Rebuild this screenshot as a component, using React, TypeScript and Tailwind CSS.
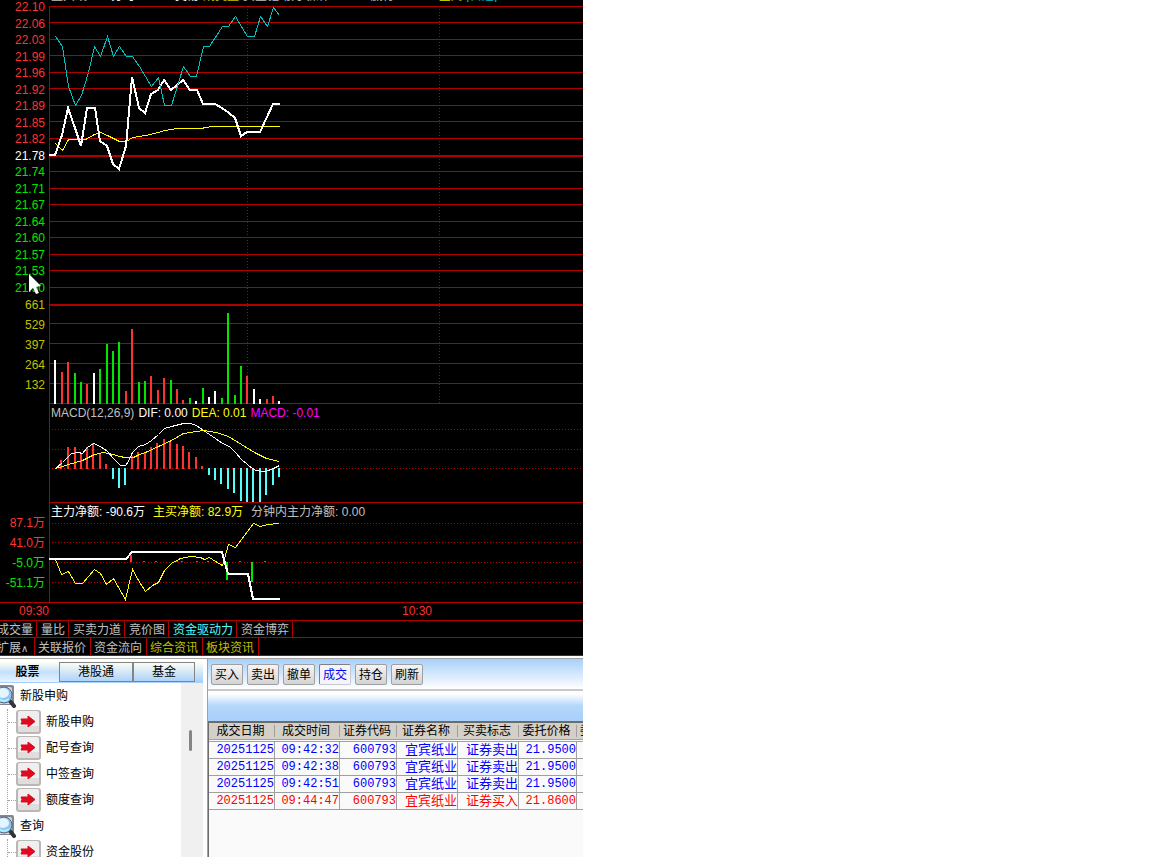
import clsx from 'clsx'

type Point = [number, number]
type Bar = [number, number, string]

const RED = '#ff3232'
const GREEN = '#00e600'
const WHITE = '#ffffff'
const CYAN = '#54fcfc'
const GRID = '#b00000'

const upPrices = ['22.10', '22.06', '22.03', '21.99', '21.96', '21.92', '21.89', '21.85', '21.82']
const downPrices = ['21.74', '21.71', '21.67', '21.64', '21.60', '21.57', '21.53', '21.50']
const volumes = ['661', '529', '397', '264', '132']

const priceGrid = [6, 22, 39, 55, 72, 88, 105, 121, 138, 171, 188, 204, 221, 237, 254, 270, 287, 323, 343, 363, 383, 403]

const priceLine: Point[] = [
  [49, 155], [55, 155], [62, 135], [68, 108], [75, 128], [81, 146], [87, 108], [95, 108], [100, 141],
  [107, 146], [113, 164], [119, 169], [126, 146], [132, 77], [139, 108], [145, 113], [151, 94], [158, 90],
  [164, 80], [171, 90], [183, 80], [190, 90], [197, 90], [203, 104], [215, 104], [222, 108], [229, 113],
  [235, 118], [241, 136], [247, 132], [260, 132], [273, 104], [280, 104],
]
const indexLine: Point[] = [
  [55, 36], [62, 46], [68, 86], [75, 105], [81, 95], [88, 72], [94, 46], [100, 56], [107, 36], [113, 56],
  [119, 46], [126, 56], [132, 56], [139, 66], [145, 76], [151, 86], [158, 77], [164, 105], [171, 105],
  [183, 66], [190, 76], [196, 76], [203, 46], [209, 46], [222, 26], [228, 26], [235, 16], [247, 36],
  [254, 36], [260, 16], [267, 26], [273, 7], [279, 15],
]
const averageLine: Point[] = [
  [55, 143], [62, 150], [68, 139], [85, 139], [94, 134], [100, 132], [107, 135], [113, 138], [119, 141],
  [126, 141], [132, 137], [145, 135], [158, 132], [164, 130], [177, 128], [200, 128], [212, 126], [279, 126],
]

const volumeBars: Bar[] = [
  [55, 360, WHITE], [62, 372, RED], [68, 362, RED], [75, 373, GREEN], [81, 382, GREEN], [87, 384, RED],
  [94, 373, WHITE], [100, 369, GREEN], [107, 344, GREEN], [113, 351, GREEN], [119, 342, GREEN], [126, 391, RED],
  [132, 329, RED], [139, 382, GREEN], [145, 381, GREEN], [151, 376, RED], [158, 390, RED], [164, 378, RED],
  [171, 380, GREEN], [177, 389, RED], [183, 400, RED], [190, 398, GREEN], [196, 401, WHITE], [203, 388, GREEN],
  [209, 397, WHITE], [215, 391, WHITE], [222, 398, GREEN], [228, 313, GREEN], [235, 395, GREEN],
  [241, 366, GREEN], [247, 376, RED], [254, 389, WHITE], [260, 399, WHITE], [267, 399, RED], [273, 396, RED],
  [279, 401, WHITE],
]

const macdBars: Point[] = [
  [61, 460], [68, 447], [75, 447], [81, 454], [87, 447], [93, 443], [100, 453], [106, 464], [113, 478],
  [119, 487], [125, 484], [132, 456], [138, 452], [145, 452], [151, 447], [157, 443], [164, 439], [170, 442],
  [177, 444], [183, 446], [189, 452], [196, 457], [202, 466], [209, 474], [215, 479], [221, 483], [228, 488],
  [234, 492], [241, 500], [247, 502], [253, 502], [260, 501], [266, 494], [273, 484], [279, 476],
]
const difLine: Point[] = [
  [55, 468], [62, 462], [71, 453], [78, 452], [82, 453], [87, 447], [93, 443], [100, 446], [107, 451],
  [113, 458], [120, 465], [125, 465], [128, 461], [132, 452], [138, 446], [145, 444], [151, 440], [158, 434],
  [164, 428], [171, 426], [183, 423], [190, 423], [196, 425], [203, 430], [215, 438], [222, 443], [229, 446],
  [235, 452], [241, 459], [247, 464], [253, 469], [260, 471], [265, 471], [273, 468], [279, 465],
]
const deaLine: Point[] = [
  [55, 468], [62, 466], [68, 464], [75, 462], [82, 460], [88, 457], [94, 454], [103, 452], [113, 454],
  [119, 456], [125, 457], [133, 457], [139, 454], [145, 452], [158, 446], [171, 440], [183, 433], [196, 431],
  [203, 430], [209, 431], [216, 432], [228, 436], [241, 444], [254, 452], [266, 458], [279, 461],
]

const mainFlow: Point[] = [
  [49, 559], [126, 559], [132, 552], [222, 552], [228, 574], [248, 574], [253, 599], [280, 599],
]
const buyFlow: Point[] = [
  [55, 559], [61, 574], [68, 571], [75, 583], [82, 583], [88, 576], [94, 569], [100, 573], [106, 584],
  [113, 578], [125, 599], [132, 569], [138, 580], [145, 591], [152, 585], [158, 582], [164, 570], [171, 563],
  [180, 558], [190, 556], [200, 557], [204, 559], [209, 557], [215, 561], [222, 565], [228, 544], [235, 547],
  [253, 523], [260, 526], [267, 524], [279, 523],
]

const indicatorTabs = ['成交量', '量比', '买卖力道', '竞价图', '资金驱动力', '资金博弈']
const infoTabs = ['关联报价', '资金流向', '综合资讯', '板块资讯']

const toolbar = ['买入', '卖出', '撤单', '成交', '持仓', '刷新']

const tree = [
  { title: '新股申购', items: ['新股申购', '配号查询', '中签查询', '额度查询'] },
  { title: '查询', items: ['资金股份'] },
]

const columns = ['成交日期', '成交时间', '证券代码', '证券名称', '买卖标志', '委托价格', '委托数量']
const trades = [
  ['20251125', '09:42:32', '600793', '宜宾纸业', '证券卖出', '21.9500'],
  ['20251125', '09:42:38', '600793', '宜宾纸业', '证券卖出', '21.9500'],
  ['20251125', '09:42:51', '600793', '宜宾纸业', '证券卖出', '21.9500'],
  ['20251125', '09:44:47', '600793', '宜宾纸业', '证券买入', '21.8600'],
]

const Line = ({ points, color, width = 1 }: { points: Point[]; color: string; width?: number }) => (
  <polyline
    points={points.map(([x, y]) => `${x + (width === 1 ? 0.5 : 0)},${y + (width === 1 ? 0.5 : 0)}`).join(' ')}
    fill="none"
    stroke={color}
    strokeWidth={width}
  />
)

const Dotted = ({ y }: { y: number }) => (
  <line x1="52" x2="200%" y1={y + 0.5} y2={y + 0.5} stroke={GRID} strokeDasharray="1 2" />
)

const PriceChart = () => (
  <svg className="block h-[404px] w-full" shapeRendering="crispEdges" role="img" aria-label="分时走势">
    <g transform="translate(-49 0)">
      {priceGrid.map((y) => (
        <rect key={y} x="49" y={y} width="100%" height="1" fill={GRID} />
      ))}
      <rect x="49" y="155" width="100%" height="2" fill={GRID} />
      <rect x="49" y="304" width="100%" height="2" fill={GRID} />
      <rect x="49" y="6" width="1" height="398" fill={GRID} />
      {[247, 439].map((x) => (
        <line key={x} x1={x + 0.5} x2={x + 0.5} y1="9" y2="404" stroke={GRID} strokeDasharray="1 2" />
      ))}
      {volumeBars.map(([x, y, color]) => (
        <rect key={x} x={x - 1} y={y} width="2" height={404 - y} fill={color} />
      ))}
      <Line points={averageLine} color="#ffff00" />
      <Line points={priceLine} color={WHITE} width={2} />
      <Line points={indexLine} color="#00c0c0" />
    </g>
  </svg>
)

const MacdChart = () => (
  <svg className="block h-[81px] w-full" shapeRendering="crispEdges" role="img" aria-label="MACD">
    <g transform="translate(-49 -422)">
      {[429, 449, 468].map((y) => (
        <Dotted key={y} y={y} />
      ))}
      {macdBars.map(([x, y]) => (
        <rect
          key={x}
          x={x - 1}
          y={Math.min(y, 468)}
          width="2"
          height={Math.abs(468 - y) + 1}
          fill={y < 468 ? RED : CYAN}
        />
      ))}
      <Line points={difLine} color={WHITE} />
      <Line points={deaLine} color="#ffff00" />
      <rect x="49" y="502" width="100%" height="1" fill={GRID} />
    </g>
  </svg>
)

const FlowChart = () => (
  <svg className="block h-[81px] w-full" shapeRendering="crispEdges" role="img" aria-label="资金驱动力">
    <g transform="translate(-49 -521)">
      {[523, 542, 562, 582].map((y) => (
        <Dotted key={y} y={y} />
      ))}
      {[144, 156, 177, 182, 197, 208, 240, 265].map((x) => (
        <rect key={x} x={x - 1} y="561" width="2" height="1" fill={RED} />
      ))}
      <rect x="130" y="555" width="2" height="7" fill={RED} />
      <rect x="226" y="562" width="2" height="18" fill={GREEN} />
      <rect x="251" y="562" width="2" height="20" fill={GREEN} />
      <Line points={buyFlow} color="#ffff00" />
      <Line points={mainFlow} color={WHITE} width={2} />
    </g>
  </svg>
)

const Cursor = () => (
  <svg className="absolute left-7 top-[273px] h-6 w-4" viewBox="0 0 16 24" aria-hidden="true">
    <path d="M1 1v18l4-4 3 6 3-1-3-6 5-1z" fill="#fff" />
  </svg>
)

const SearchIcon = () => (
  <svg className="-ml-2 h-[26px] w-6 shrink-0" viewBox="0 0 24 26" aria-hidden="true">
    <rect x="1" y="2" width="21" height="20" rx="2" fill="#85868e" />
    <rect x="2" y="4" width="18" height="17" rx="2" fill="#d4d8e0" />
    <path d="M18 18l4 5" stroke="#33333c" strokeWidth="4" strokeLinecap="round" />
    <circle cx="12" cy="12" r="8" fill="#8cc4f6" stroke="#5c6478" strokeWidth="1" />
    <ellipse cx="11" cy="10" rx="6" ry="5" fill="#e4f5ff" />
    <path d="M7 16q5 4 10 0" stroke="#a9f0ff" strokeWidth="2" fill="none" />
  </svg>
)

const ArrowIcon = () => (
  <svg className="h-[26px] w-[26px] shrink-0" viewBox="0 0 26 26" aria-hidden="true">
    <rect x="0" y="1" width="25" height="24" rx="3" fill="#bcb6b6" />
    <rect x="2" y="2" width="21" height="21" rx="2" fill="#f0efef" />
    <path d="M2 17h21v4a2 2 0 0 1-2 2H4a2 2 0 0 1-2-2z" fill="#dfdddd" />
    <path d="M5 10h7V7l7 5.500-7 5.500v-3H5l1-2.500z" fill="#de0a20" stroke="#de0a20" strokeLinejoin="round" />
  </svg>
)

const Quotes = () => (
  <section className="relative bg-black text-xs text-[#c0c0c0]">
    <div className="absolute left-[51px] top-0 flex h-0.5 items-end gap-3 overflow-hidden whitespace-nowrap leading-3">
      <span>宜宾纸业</span>
      <span className="mr-7 text-white">分时</span>
      <span className="text-white">交易</span>
      <span className="-ml-2 text-[#c0c000]">成交量</span>
      <span className="-ml-2">资金驱动力 操作</span>
      <span className="ml-7">赢行</span>
      <span className="ml-8 text-[#c0c000]">区间</span>
      <span className="-ml-2 text-[#00c0c0]">[自选]</span>
    </div>

    {/* Price and volume */}
    <div className="flex">
      <div className="w-[49px] shrink-0 pr-1 text-right">
        <div className="flex h-[295px] flex-col justify-between leading-[14px]">
          {upPrices.map((p) => (
            <span key={p} className="text-[#ff3232]">{p}</span>
          ))}
          <span className="text-white">21.78</span>
          {downPrices.map((p) => (
            <span key={p} className="text-[#00e600]">{p}</span>
          ))}
        </div>
        {volumes.map((v) => (
          <div key={v} className="leading-5 text-[#c0c000]">{v}</div>
        ))}
      </div>
      <div className="min-w-0 flex-1">
        <PriceChart />
      </div>
    </div>

    {/* MACD */}
    <div className="ml-[49px] border-l border-[#b00000]">
      <div className="flex gap-1 whitespace-nowrap pl-px leading-[18px]">
        <span>MACD(12,26,9)</span>
        <span className="text-white">DIF: 0.00</span>
        <span className="text-[#ffff00]">DEA: 0.01</span>
        <span className="text-[#ff00ff]">MACD: -0.01</span>
      </div>
      <div className="-ml-px">
        <MacdChart />
      </div>
    </div>

    {/* Money flow */}
    <div className="flex border-b border-[#b00000]">
      <div className="w-[49px] shrink-0 whitespace-nowrap pr-1 pt-[10px] text-right leading-5">
        <div className="text-[#ff3232]">87.1万</div>
        <div className="text-[#ff3232]">41.0万</div>
        <div className="text-[#00e600]">-5.0万</div>
        <div className="text-[#00e600]">-51.1万</div>
      </div>
      <div className="min-w-0 flex-1 border-l border-[#b00000]">
        <div className="flex gap-2 whitespace-nowrap pl-px leading-[18px]">
          <span className="text-white">主力净额: -90.6万</span>
          <span className="text-[#ffff00]">主买净额: 82.9万</span>
          <span>分钟内主力净额: 0.00</span>
        </div>
        <div className="-ml-px">
          <FlowChart />
        </div>
      </div>
    </div>

    <div className="flex border-b border-[#b00000] leading-[17px] text-[#ff3232]">
      <span className="w-[49px] shrink-0 text-right">09:30</span>
      <span className="ml-[353px]">10:30</span>
    </div>

    <div className="overflow-hidden border-b border-[#b00000]">
      <div className="-ml-[7px] flex whitespace-nowrap">
        {indicatorTabs.map((tab) => (
          <button
            key={tab}
            className={clsx(
              'h-4 shrink-0 border-r border-[#b00000] pl-1 pr-[3px] leading-[18px]',
              tab === '资金驱动力' && 'text-[#54fcfc]',
            )}
          >
            {tab}
          </button>
        ))}
      </div>
    </div>
    <div className="overflow-hidden border-b border-[#b00000]">
      <div className="-ml-[7px] flex whitespace-nowrap">
        <button className="h-[17px] w-[42px] shrink-0 border-r border-[#b00000] pl-1 text-left leading-5">
          扩展<span className="font-['DejaVu_Sans',sans-serif] text-[10px]">∧</span>
        </button>
        {infoTabs.map((tab) => (
          <button
            key={tab}
            className={clsx(
              'h-[17px] shrink-0 border-r border-[#b00000] pl-[3px] pr-1 leading-5',
              tab.endsWith('资讯') && 'text-[#c0c000]',
            )}
          >
            {tab}
          </button>
        ))}
      </div>
    </div>
    <Cursor />
  </section>
)

const Sidebar = () => (
  <aside className="flex w-[207px] shrink-0 flex-col pr-1 pt-[3px]">
    <div className="flex h-[21px] shrink-0 border-b border-[#a8d0fa] bg-gradient-to-b from-[#fffff2] to-[#a8d0fa]">
      <button className="w-[59px] bg-gradient-to-b from-[#fffff2] via-[#c4e0fb] to-[#e6f3ff] pr-1 font-bold">股票</button>
      <button className="w-[74px] border border-[#848484]">港股通</button>
      <button className="w-[62px] border border-[#848484]">基金</button>
    </div>
    <div className="flex min-h-0 flex-1">
      <ul className="flex-1 overflow-hidden">
        {tree.map((group) => (
          <li key={group.title}>
            <button className="flex h-[26px] items-center gap-1">
              <SearchIcon />
              {group.title}
            </button>
            <ul className="ml-[7px] border-l border-dotted border-[#a0a0a0]">
              {group.items.map((item) => (
                <li key={item} className="flex h-[26px] items-center">
                  <span className="w-2 border-t border-dotted border-[#a0a0a0]" />
                  <button className="flex items-center gap-1">
                    <ArrowIcon />
                    {item}
                  </button>
                </li>
              ))}
            </ul>
          </li>
        ))}
      </ul>
      <div className="w-[22px] bg-[#f0f0f0] pt-[47px]">
        <div className="ml-2 h-[21px] w-[3px] rounded-full bg-[#858585]" />
      </div>
    </div>
  </aside>
)

const Trades = () => (
  <section className="flex min-w-0 flex-1 flex-col border-l border-[#a0a0a0]">
    <div className="flex h-8 shrink-0 items-center gap-1 border-b-2 border-[#c8c8c8] bg-gradient-to-b from-[#a8d0fa] to-white pl-[3px] pt-px">
      {toolbar.map((label) => (
        <button
          key={label}
          className={clsx(
            'h-[21px] w-8 rounded-[2px] border leading-[18px]',
            label === '成交'
              ? 'border-[#c8c8d0] border-l-[#808080] border-t-[#808080] bg-[#f4f4fa] text-[#0000ff]'
              : 'border-[#a0a0a0] bg-gradient-to-b from-[#f4f4f4] to-[#d4d4d4]',
          )}
        >
          {label}
        </button>
      ))}
    </div>
    <div className="h-[30px] shrink-0 bg-gradient-to-b from-white from-10% via-[#b4d6fb] via-50% to-[#a8d0fa]" />
    <div className="flex-1 overflow-hidden border-l border-t-2 border-[#6c6c6c] bg-[#fafafa]">
      <table className="w-[425px] table-fixed border-separate border-spacing-0">
        <colgroup>
          <col className="w-[66px]" />
          <col className="w-[65px]" />
          <col className="w-[57px]" />
          <col className="w-[61px]" />
          <col className="w-[61px]" />
          <col className="w-[58px]" />
          <col className="w-[57px]" />
        </colgroup>
        <thead>
          <tr>
            {columns.map((name) => (
              <th key={name} className="h-[17px] border-b border-[#a0a0a0] bg-[#d4d0c8] p-0 font-normal">
                <div className="whitespace-nowrap border-r border-[#a0a0a0] pr-0.5 leading-3">{name}</div>
              </th>
            ))}
          </tr>
          <tr>
            <td colSpan={7} className="h-[2px] border-b border-[#a0a0a0] p-0" />
          </tr>
        </thead>
        <tbody>
          {trades.map((row) => (
            <tr key={row[1]} className={row[4] === '证券买入' ? 'text-[#ff0000]' : 'text-[#0000ff]'}>
              {columns.map((name, i) => (
                <td
                  key={name}
                  className={clsx(
                    'h-[17px] whitespace-nowrap border-b border-r border-[#a0a0a0] p-0 text-right leading-4',
                    i === 3 || i === 4
                      ? 'text-[13px]'
                      : "font-['Liberation_Mono','Noto_Sans_CJK_SC',monospace]",
                  )}
                >
                  {row[i]}
                </td>
              ))}
            </tr>
          ))}
        </tbody>
      </table>
    </div>
  </section>
)

export default function App() {
  return (
    <div className="bg-white font-['Liberation_Sans','Noto_Sans_CJK_SC',sans-serif]">
      <main className="flex h-screen w-full max-w-[583px] flex-col overflow-hidden">
        <Quotes />
        <div className="mt-0.5 flex min-h-0 flex-1 border-t border-[#a0a0a0] text-xs text-black">
          <Sidebar />
          <Trades />
        </div>
      </main>
    </div>
  )
}
